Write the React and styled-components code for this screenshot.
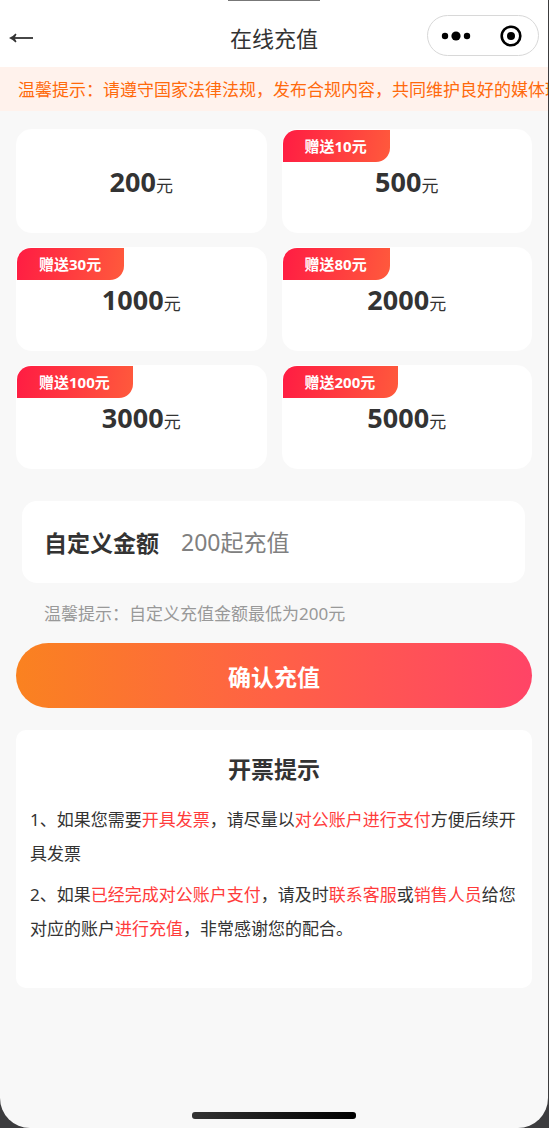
import React, { useState } from 'react';
import styled, { createGlobalStyle } from 'styled-components';

const GlobalStyle = createGlobalStyle`
  * {
    box-sizing: border-box;
  }

  body {
    margin: 0;
    background: #3c3c3e;
    color: #333;
    font-family: "Noto Sans", "Noto Sans CJK SC", sans-serif;
    font-size: 17px;
  }

  button,
  input {
    font-family: inherit;
    border: none;
    padding: 0;
    background: none;
    color: inherit;
  }

  button {
    cursor: pointer;
  }
`;

const Screen = styled.div`
  position: relative;
  display: flex;
  flex-direction: column;
  min-height: 100vh;
  margin-right: 1px;
  background: #f8f8f8;
  border-radius: 0 0 30px 30px;
  overflow: hidden;
`;

const Speaker = styled.div`
  position: absolute;
  top: 0;
  left: 50%;
  width: 92px;
  height: 1px;
  margin-left: -46px;
  background: #777;
`;

const HomeBar = styled.div`
  width: 164px;
  height: 7px;
  margin: auto auto 9px;
  border-radius: 3px;
  background: linear-gradient(90deg, #333, #000);
`;

const Header = styled.header`
  display: grid;
  grid-template-columns: 1fr auto 1fr;
  align-items: center;
  height: 67px;
  padding: 4px 9px 0;
  background: #fff;
`;

const BackButton = styled.button`
  display: flex;
  justify-self: start;
  padding: 8px 0 4px;
`;

const Title = styled.h1`
  margin: 0;
  padding-top: 4px;
  font-size: 22px;
  line-height: 32px;
  font-weight: 400;
`;

const Capsule = styled.div`
  display: flex;
  justify-self: end;
  width: 112px;
  height: 41px;
  border: 1px solid #d8d8d8;
  border-radius: 21px;
  background: #fff;
`;

const CapsuleButton = styled.button`
  display: flex;
  flex: 1;
  align-items: center;
  justify-content: center;
`;

const Notice = styled.div`
  height: 44px;
  padding-left: 18px;
  line-height: 46px;
  background: #fff2ec;
  color: #ff6a0c;
  white-space: nowrap;
  overflow: hidden;
`;

const Content = styled.main`
  padding: 18px 16px 24px;
`;

const AmountGrid = styled.div`
  display: grid;
  grid-template-columns: 1fr 1fr;
  gap: 14px 15px;
`;

const AmountCard = styled.button`
  position: relative;
  height: 104px;
  border: 1px solid #fff;
  border-radius: 15px;
  background: #fff;
  font-size: 17px;
`;

const AmountValue = styled.strong`
  font-size: 27px;
  font-weight: 700;
`;

const Badge = styled.span`
  position: absolute;
  top: 0;
  left: 0;
  padding: 0 23px 0 22px;
  border-radius: 14px 0 14px 0;
  background: linear-gradient(100deg, #ff1c43, #ff5a3c);
  color: #fff;
  font-size: 15px;
  line-height: 32px;
  font-weight: 700;
`;

const CustomRow = styled.div`
  display: flex;
  align-items: center;
  height: 82px;
  margin: 32px 7px 0 6px;
  padding: 0 22px;
  border-radius: 15px;
  background: #fff;
  font-size: 23px;

  label {
    margin-right: 22px;
    font-weight: 700;
  }

  input {
    flex: 1;
    min-width: 0;
    height: 48px;
    font-size: 23px;
    outline: none;
  }

  input::placeholder {
    color: #808080;
  }
`;

const Hint = styled.p`
  margin: 18px 28px 16px;
  color: #999;
  line-height: 26px;
`;

const SubmitButton = styled.button`
  display: block;
  width: 100%;
  height: 65px;
  border-radius: 33px;
  background: linear-gradient(90deg, #fa8220, #ff6146 50%, #ff4466);
  color: #fff;
  font-size: 23px;
  font-weight: 700;
`;

const InvoiceCard = styled.section`
  margin-top: 22px;
  padding: 22px 14px 35px;
  border-radius: 10px;
  background: #fff;

  h2 {
    margin: 0 0 17px;
    font-size: 23px;
    line-height: 34px;
    text-align: center;
  }

  p {
    margin: 0 0 7px;
    line-height: 34px;
  }

  em {
    color: #ff3b3b;
    font-style: normal;
  }
`;

const AMOUNTS = [
  { value: 200 },
  { value: 500, gift: 10 },
  { value: 1000, gift: 30 },
  { value: 2000, gift: 80 },
  { value: 3000, gift: 100 },
  { value: 5000, gift: 200 },
];

const BackIcon = () => (
  <svg width="25" height="14" viewBox="0 0 25 14">
    <path d="M3 7H24" stroke="#333" strokeWidth="1.800" fill="none" />
    <path d="M0 7Q4 5.500 6.500 2.500L7.500 3.500L5.500 7L7.500 10.500L6.500 11.500Q4 8.500 0 7Z" fill="#333" />
  </svg>
);

const MoreIcon = () => (
  <svg width="30" height="12" viewBox="0 0 30 12">
    <circle cx="4" cy="6" r="3.200" />
    <circle cx="15" cy="6" r="4.600" />
    <circle cx="26" cy="6" r="3.200" />
  </svg>
);

const CloseIcon = () => (
  <svg width="22" height="22" viewBox="0 0 22 22">
    <circle cx="11" cy="11" r="9.300" fill="none" stroke="#000" strokeWidth="2.600" />
    <circle cx="11" cy="11" r="4" />
  </svg>
);

export default function App() {
  const [amount, setAmount] = useState('');

  return (
    <>
      <GlobalStyle />
      <Screen>
        <Speaker />
        <Header>
          <BackButton aria-label="返回">
            <BackIcon />
          </BackButton>
          <Title>在线充值</Title>
          <Capsule>
            <CapsuleButton aria-label="更多">
              <MoreIcon />
            </CapsuleButton>
            <CapsuleButton aria-label="关闭">
              <CloseIcon />
            </CapsuleButton>
          </Capsule>
        </Header>
        <Notice>温馨提示：请遵守国家法律法规，发布合规内容，共同维护良好的媒体环境</Notice>

        <Content>
          <AmountGrid>
            {AMOUNTS.map((item) => (
              <AmountCard key={item.value} onClick={() => setAmount(String(item.value))}>
                {item.gift && <Badge>赠送{item.gift}元</Badge>}
                <AmountValue>{item.value}</AmountValue>元
              </AmountCard>
            ))}
          </AmountGrid>

          <CustomRow>
            <label htmlFor="amount">自定义金额</label>
            <input
              id="amount"
              inputMode="numeric"
              placeholder="200起充值"
              value={amount}
              onChange={(e) => setAmount(e.target.value)}
            />
          </CustomRow>
          <Hint>温馨提示：自定义充值金额最低为200元</Hint>
          <SubmitButton>确认充值</SubmitButton>

          <InvoiceCard>
            <h2>开票提示</h2>
            <p>
              1、如果您需要<em>开具发票</em>，请尽量以<em>对公账户进行支付</em>方便后续开具发票
            </p>
            <p>
              2、如果<em>已经完成对公账户支付</em>，请及时<em>联系客服</em>或<em>销售人员</em>给您对应的账户<em>进行充值</em>，非常感谢您的配合。
            </p>
          </InvoiceCard>
        </Content>
        <HomeBar />
      </Screen>
    </>
  );
}
